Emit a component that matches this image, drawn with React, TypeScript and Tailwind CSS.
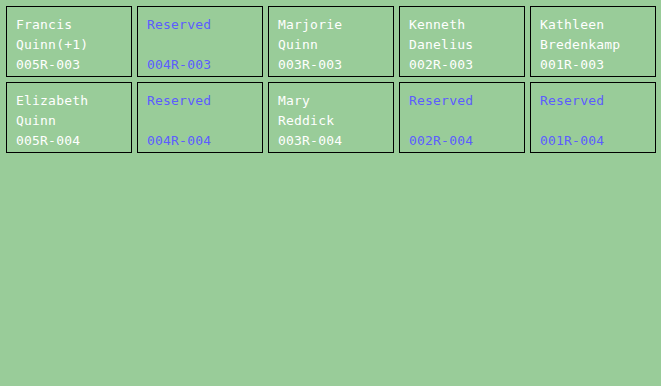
import React from 'react';

type Slot = { name?: [string, string]; code: string };

const rows: Slot[][] = [
  [
    { name: ['Francis', 'Quinn(+1)'], code: '005R-003' },
    { code: '004R-003' },
    { name: ['Marjorie', 'Quinn'], code: '003R-003' },
    { name: ['Kenneth', 'Danelius'], code: '002R-003' },
    { name: ['Kathleen', 'Bredenkamp'], code: '001R-003' },
  ],
  [
    { name: ['Elizabeth', 'Quinn'], code: '005R-004' },
    { code: '004R-004' },
    { name: ['Mary', 'Reddick'], code: '003R-004' },
    { code: '002R-004' },
    { code: '001R-004' },
  ],
];

const SlotCard = ({ slot }: { slot: Slot }) => {
  const reserved = !slot.name;
  return (
    <div
      className={`h-[71px] border border-black pl-[9px] pt-[8px] leading-[20px] ${
        reserved ? 'text-[#5c5cff]' : 'text-white'
      }`}
    >
      <div>{reserved ? 'Reserved' : slot.name![0]}</div>
      <div>{reserved ? '\u00a0' : slot.name![1]}</div>
      <div>{slot.code}</div>
    </div>
  );
};

export default function App() {
  return (
    <div className="min-h-screen w-full bg-[#99cc99] pl-[6px] pt-[6px] font-['DejaVu_Sans_Mono',monospace] text-[13px] tracking-[0.2px]">
      <div className="grid grid-cols-[repeat(5,126px)] gap-[5px]">
        {rows.flat().map((slot) => (
          <SlotCard key={slot.code} slot={slot} />
        ))}
      </div>
    </div>
  );
}
